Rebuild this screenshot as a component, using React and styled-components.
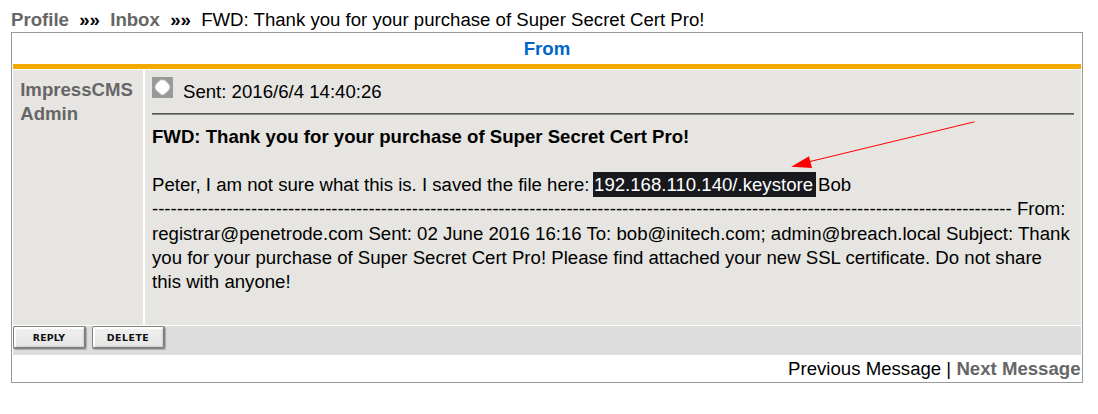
import React from "react";
import styled, { createGlobalStyle } from "styled-components";

const GlobalStyle = createGlobalStyle`
  * { box-sizing: border-box; }
  body {
    margin: 0;
    background: #fff;
    color: #000;
    font: 18.62px/24.2px "Liberation Sans", Arial, sans-serif;
  }
`;

const Page = styled.main`
  position: relative;
  width: 1098px;
  height: 414px;
  padding: 8px 15px 0 11px;
`;

const Breadcrumb = styled.nav`
  display: flex;
  height: 24px;
  white-space: pre;
`;

const Link = styled.a`
  color: #666;
  font-weight: bold;
  text-decoration: none;
`;

const Separator = styled.b`
  margin: 0 10.3px;
`;

const Panel = styled.section`
  display: flex;
  flex-direction: column;
  height: 351px;
  padding: 0 1px;
  border: 1px solid #999;
`;

const PanelHeader = styled.header`
  height: 36px;
  padding-top: 4px;
  border-bottom: 5px solid #f5a907;
  color: #06c;
  font-weight: bold;
  text-align: center;
`;

const MessageRow = styled.div`
  display: grid;
  grid-template-columns: 130px 1fr;
  gap: 2px;
  height: 255px;
  margin: 1px 0;
`;

const Sender = styled.div`
  padding: 8px 7px 0 7.2px;
  background: #e6e5e1;
`;

const Message = styled.article`
  padding: 7px 7px 0;
  background: #e6e5e1;
`;

const SentLine = styled.div`
  display: flex;
  gap: 10px;
  height: 36px;
  line-height: 30px;
`;

const Rule = styled.hr`
  height: 2px;
  margin: 0;
  border: 0;
  border-top: 1px solid #555;
  background: #888;
`;

const Subject = styled.h1`
  margin: 10px 0 24px;
  font: inherit;
  font-size: 18.6px;
  font-weight: bold;
`;

const Body = styled.p`
  margin: 0;
  white-space: nowrap;
`;

const Highlight = styled.span`
  margin: 0 2px 0 -1.7px;
  padding: 2px 3px 2px 1px;
  background: #17191d;
  color: #fff;
`;

const Dashes = styled.span`
  letter-spacing: -0.012px;
`;

const Actions = styled.div`
  display: flex;
  gap: 6px;
  height: 29px;
  background: #ddd;
`;

const ActionButton = styled.button`
  width: 73px;
  height: 23px;
  padding: 0;
  border: 1.5px solid #808080;
  border-right-width: 2px;
  border-bottom-width: 2px;
  border-radius: 2px;
  background: linear-gradient(#f0f0f0, #e5e5e5);
  box-shadow: inset 1px 1px 1px 1px #fff, inset -1px -1px 1px #ccc, 1px 1px 1px #aaa;
  color: #111;
  font: bold 9.4px/21px "DejaVu Sans", sans-serif;
  letter-spacing: ${({ $spacing }) => $spacing}px;
`;

const Pager = styled.footer`
  padding: 2px 0.5px 0 0;
  text-align: right;
`;

const Arrow = styled.svg`
  position: absolute;
  left: 785px;
  top: 115px;
`;

function MessageIcon() {
  return (
    <svg width="21" height="21" viewBox="0 0 21 21">
      <path fill="#999" d="M0 0h21v21H0z" />
      <path
        fill="#fff"
        stroke="#b8cccc"
        strokeWidth=".8"
        d="M8.5 3h4l2 2 2.2 2 1.3 3.2-1.3 3-2.2 2L12.5 17l-2 1-2-1-2.1-2L4 13l-1-2.8L4 7.3 6.4 5z"
      />
    </svg>
  );
}

export default function App() {
  return (
    <Page>
      <GlobalStyle />
      <Breadcrumb>
        <Link>Profile</Link>
        <Separator>»»</Separator>
        <Link>Inbox</Link>
        <Separator>»»</Separator>
        <span>FWD: Thank you for your purchase of Super Secret Cert Pro!</span>
      </Breadcrumb>
      <Panel>
        <PanelHeader>From</PanelHeader>
        <MessageRow>
          <Sender>
            <Link>
              ImpressCMS
              <br />
              Admin
            </Link>
          </Sender>
          <Message>
            <SentLine>
              <MessageIcon />
              <span>Sent: 2016/6/4 14:40:26</span>
            </SentLine>
            <Rule />
            <Subject>FWD: Thank you for your purchase of Super Secret Cert Pro!</Subject>
            <Body>
              Peter, I am not sure what this is. I saved the file here:{" "}
              <Highlight>192.168.110.140/.keystore</Highlight>Bob
              <br />
              <Dashes>{"-".repeat(139)}</Dashes> From:
              <br />
              registrar@penetrode.com Sent: 02 June 2016 16:16 To: bob@initech.com; admin@breach.local Subject: Thank
              <br />
              you for your purchase of Super Secret Cert Pro! Please find attached your new SSL certificate. Do not share
              <br />
              this with anyone!
            </Body>
          </Message>
        </MessageRow>
        <Actions>
          <ActionButton $spacing={0.1}>REPLY</ActionButton>
          <ActionButton $spacing={0.5}>DELETE</ActionButton>
        </Actions>
        <Pager>
          Previous Message | <Link>Next Message</Link>
        </Pager>
      </Panel>
      <Arrow width="200" height="60" viewBox="785 115 200 60">
        <path d="M974.5 121.8 808 162" stroke="#f00" strokeWidth="1" fill="none" />
        <path d="M791.2 166.7 809 156.3 812 168z" fill="#f00" />
      </Arrow>
    </Page>
  );
}
